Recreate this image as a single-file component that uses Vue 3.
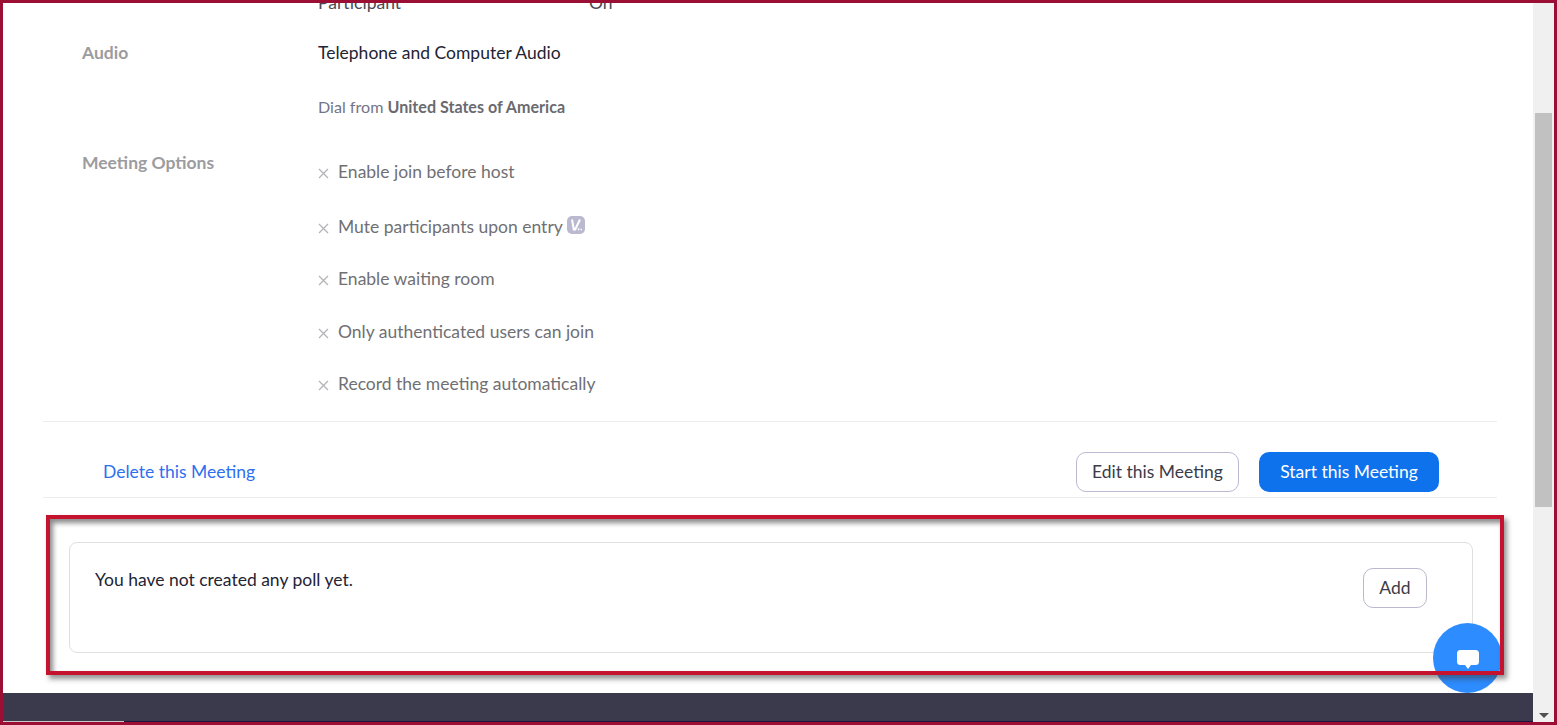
<script setup>
const options = [
  { label: 'Enable join before host' },
  { label: 'Mute participants upon entry', badge: true },
  { label: 'Enable waiting room' },
  { label: 'Only authenticated users can join' },
  { label: 'Record the meeting automatically' }
]
</script>

<template>
  <div class="shot">
    <main class="page">
      <div class="scroller">
        <div class="row clipped">
          <div class="label"></div>
          <div class="value pair"><span class="pair-name">Participant</span><span>On</span></div>
        </div>

        <div class="row audio">
          <div class="label">Audio</div>
          <div class="value">
            <div class="audio-type">Telephone and Computer Audio</div>
            <div class="dial">Dial from <b>United States of America</b></div>
          </div>
        </div>

        <div class="row options">
          <div class="label">Meeting Options</div>
          <ul class="option-list">
            <li v-for="o in options" :key="o.label" class="option">
              <svg class="cross" width="11" height="11" viewBox="0 0 11 11" aria-hidden="true">
                <path d="M1 1l9 9M10 1l-9 9" stroke="#b4b4b8" stroke-width="1.300" fill="none" />
              </svg>
              <span>{{ o.label }}</span>
              <svg v-if="o.badge" class="badge" width="18" height="18" viewBox="0 0 18 18" aria-hidden="true">
                <rect width="18" height="18" rx="5" fill="#bab9cf" />
                <path d="M5 3.500l1.800 10h1.400L13 3.500" stroke="#fff" stroke-width="2" fill="none" />
                <path d="M11 14l1.200-1.400M13.500 13.500h1.500" stroke="#fff" stroke-width="1.600" fill="none" />
              </svg>
            </li>
          </ul>
        </div>

        <div class="actions">
          <a class="delete">Delete this Meeting</a>
          <div class="buttons">
            <button class="btn outline">Edit this Meeting</button>
            <button class="btn primary">Start this Meeting</button>
          </div>
        </div>

        <section class="poll">
          <p>You have not created any poll yet.</p>
          <button class="btn outline add">Add</button>
        </section>
      </div>

      <footer class="dark-footer">
        <div class="foot-line"></div>
      </footer>
    </main>

    <aside class="scrollbar">
      <div class="thumb"></div>
      <div class="arrow"></div>
    </aside>

    <div class="chat">
      <svg width="24" height="22" viewBox="0 0 24 22" aria-hidden="true">
        <path d="M4.500 1h15A3.500 3.500 0 0 1 23 4.500v8a3.500 3.500 0 0 1-3.500 3.500H15l-3 4-3-4H4.500A3.500 3.500 0 0 1 1 12.500v-8A3.500 3.500 0 0 1 4.500 1z" fill="#fff" />
      </svg>
    </div>
    <div class="highlight"></div>
  </div>
</template>

<style>
html, body { margin: 0; overflow: hidden; background: #fff; }
</style>

<style scoped>
.shot {
  position: relative;
  box-sizing: border-box;
  width: 1557px;
  height: 725px;
  display: flex;
  overflow: hidden;
  border: 3px solid #9b0f35;
  background: #fff;
  font-family: Lato, "Liberation Sans", sans-serif;
  color: #232333;
}
.page { flex: 1; min-width: 0; display: flex; flex-direction: column; }
.scroller { flex: 1; min-height: 0; overflow: hidden; padding: 0 36px 0 40px; }
.row { display: flex; }
.label {
  width: 236px;
  margin-left: 39px;
  flex: none;
  font-size: 17.500px;
  font-weight: 700;
  line-height: 24px;
  color: #9c9ca0;
}
.clipped { height: 0; }
.pair { display: flex; font-size: 17.500px; line-height: 24px; margin-top: -12px; color: #4a4a55; }
.pair-name { width: 271px; }
.audio { margin-top: 38px; height: 112px; }
.audio-type { font-size: 17.500px; line-height: 24px; color: #232333; }
.dial { margin-top: 32px; font-size: 16.100px; line-height: 20px; color: #747487; }
.dial b { font-weight: 700; color: #6a6a70; }
.options { border-bottom: 1px solid #ededed; height: 269px; box-sizing: border-box; }
.options .label { margin-top: -2px; }
.option-list { list-style: none; margin: 6px 0 0; padding: 0; }
.option {
  display: flex;
  align-items: center;
  height: 24px;
  margin-bottom: 28.500px;
  font-size: 17.500px;
  color: #707074;
}
.option:first-child { margin-bottom: 31px; }
.cross { margin: 4px 9px 0 0; flex: none; }
.badge { margin: -2px 0 0 4px; }
.actions {
  box-sizing: border-box;
  display: flex;
  align-items: flex-end;
  justify-content: space-between;
  height: 76px;
  padding: 0 58px 5px 60px;
  border-bottom: 1px solid #ededed;
}
.delete { font-size: 17.500px; line-height: 40px; color: #2d6ff0; }
.buttons { display: flex; gap: 20px; }
.btn {
  box-sizing: border-box;
  height: 40px;
  border-radius: 10px;
  font-family: inherit;
  font-size: 17.500px;
  padding: 0 0 2px;
}
.outline { width: 163px; background: #fff; color: #3c3c48; border: 1px solid #bab9cf; }
.primary { width: 180px; background: #0e72ed; color: #fff; border: 0; }
.poll {
  box-sizing: border-box;
  position: relative;
  display: flex;
  justify-content: space-between;
  align-items: flex-start;
  height: 111px;
  margin: 44px 24px 0 26px;
  padding: 25px 45px 0 25px;
  border: 1px solid #dfdfdf;
  border-radius: 8px;
}
.poll p { margin: 0; font-size: 17.500px; line-height: 24px; color: #232333; }
.add { width: 64px; }
.dark-footer { position: relative; flex: none; height: 29px; background: #3a3a4c; }
.foot-line { position: absolute; left: 0; bottom: 0; width: 121px; height: 1px; background: #c8c8c8; }
.dark-footer::after {
  content: "";
  position: absolute;
  left: 121px;
  right: 0;
  bottom: 0;
  height: 1px;
  background: #1c1340;
}
.scrollbar { position: relative; flex: none; width: 21px; background: #f0f0f0; }
.thumb { position: absolute; left: 2px; right: 2px; top: 110px; height: 394px; background: #c1c1c1; }
.arrow {
  position: absolute;
  left: 6px;
  bottom: 4px;
  border-left: 5px solid transparent;
  border-right: 5px solid transparent;
  border-top: 5px solid #505050;
}
.chat {
  position: absolute;
  left: 1430px;
  top: 620px;
  width: 69px;
  height: 70px;
  border-radius: 50%;
  background: #2d8cff;
  display: flex;
  align-items: center;
  justify-content: center;
}
.chat svg { margin-top: 3px; }
.highlight {
  position: absolute;
  left: 43px;
  top: 512px;
  width: 1458px;
  height: 160px;
  box-sizing: border-box;
  border: 4px solid #c4122f;
  box-shadow: 3px 4px 5px rgba(60, 60, 60, .55), inset 3px 4px 5px rgba(60, 60, 60, .6);
}
</style>
